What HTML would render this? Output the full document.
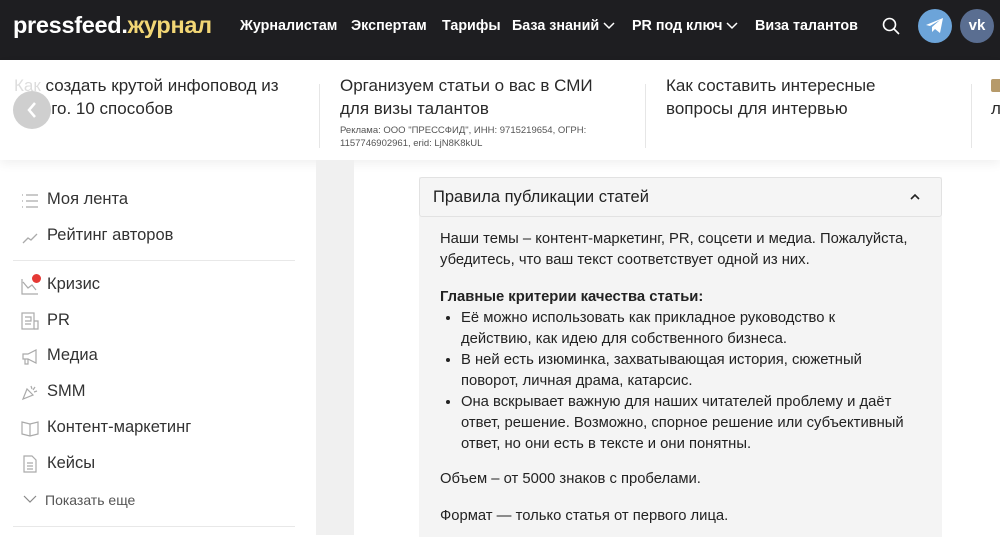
<!DOCTYPE html>
<html><head><meta charset="utf-8"><style>
*{margin:0;padding:0;box-sizing:border-box}
body{width:1000px;height:535px;overflow:hidden;background:#fff;font-family:"Liberation Sans",Arial,sans-serif;position:relative}
.hdr{position:absolute;left:0;top:0;width:1000px;height:60px;background:#1e1e21}
.logo{position:absolute;left:13px;top:12px;font-size:23.5px;font-weight:bold;color:#fff;letter-spacing:-0.3px}
.logo span{color:#f2d675}
.nav{position:absolute;top:18px;font-size:14.3px;font-weight:bold;color:#fff;white-space:nowrap}
.car{position:absolute;left:0;top:60px;width:1000px;height:100px;background:#fff;box-shadow:0 4px 10px rgba(0,0,0,0.06)}
.ci{position:absolute;top:14px;font-size:17px;color:#2a2a2a;line-height:23px}
.sep{position:absolute;top:24px;width:1px;height:64px;background:#e6e6e6}
.gray{position:absolute;left:316px;top:160px;width:38px;height:375px;background:#f0f0f0}
.side{position:absolute;left:20px;font-size:16.5px;color:#333}
.ic{position:absolute;left:21px;width:18px;height:18px}
.hr{position:absolute;left:13px;width:282px;height:1px;background:#e8e8e8}
.acc{position:absolute;left:419px;top:177px;width:523px;height:360px;background:#f4f4f4}
.acch{height:40px;border:1px solid #e2e2e2;border-radius:3px;background:#f5f5f5;font-size:16.5px;color:#222;padding:10px 13px}
.txt{font-size:14.8px;color:#222;line-height:21px;position:absolute;left:21px;width:475px}
ul{padding-left:21px;width:500px;white-space:nowrap}
</style></head><body>
<div class="hdr">
<div class="logo">pressfeed.<span>журнал</span></div>
<div class="nav" style="left:240px">Журналистам</div>
<div class="nav" style="left:351px">Экспертам</div>
<div class="nav" style="left:442px">Тарифы</div>
<div class="nav" style="left:512px">База знаний <svg width="12" height="10" viewBox="0 0 12 10"><path d="M1 3l5 5 5-5" stroke="#fff" fill="none" stroke-width="1.5"/></svg></div>
<div class="nav" style="left:632px">PR под ключ <svg width="12" height="10" viewBox="0 0 12 10"><path d="M1 3l5 5 5-5" stroke="#fff" fill="none" stroke-width="1.5"/></svg></div>
<div class="nav" style="left:755px">Виза талантов</div>
<svg style="position:absolute;left:882px;top:17px" width="18" height="18" viewBox="0 0 18 18"><circle cx="7.5" cy="7.5" r="6" stroke="#fff" stroke-width="1.6" fill="none"/><path d="M12 12l5 5" stroke="#fff" stroke-width="1.6"/></svg>
<div style="position:absolute;left:918px;top:9px;width:34px;height:34px;border-radius:50%;background:#6ca4d9"></div>
<svg style="position:absolute;left:925px;top:17px" width="20" height="18" viewBox="0 0 20 18"><path d="M1 8l17-7-3 15-5-4-3 3 0-5 8-7-10 6z" fill="#fff"/></svg>
<div style="position:absolute;left:960px;top:9px;width:34px;height:34px;border-radius:50%;background:#5a6e91;color:#fff;font-weight:bold;font-size:15px;text-align:center;line-height:34px">vk</div>
</div>
<div class="car">
<div class="ci" style="left:14px;width:290px"><span style="color:#ddd">Как</span> создать крутой инфоповод из ничего. 10 способов</div>
<div style="position:absolute;left:13px;top:31px;width:38px;height:38px;border-radius:50%;background:#cfcfcf"></div>
<svg style="position:absolute;left:25px;top:40px" width="14" height="20" viewBox="0 0 14 20"><path d="M10 3l-6 7 6 7" stroke="#fff" stroke-width="2.5" fill="none"/></svg>
<div class="sep" style="left:319px"></div>
<div class="ci" style="left:340px;width:280px">Организуем статьи о вас в СМИ для визы талантов</div>
<div style="position:absolute;left:340px;top:64px;font-size:9.5px;color:#555;line-height:13px;width:260px">Реклама: ООО "ПРЕССФИД", ИНН: 9715219654, ОГРН: 1157746902961, erid: LjN8K8kUL</div>
<div class="sep" style="left:645px"></div>
<div class="ci" style="left:666px;width:260px">Как составить интересные вопросы для интервью</div>
<div class="sep" style="left:971px"></div>
<div style="position:absolute;left:991px;top:19px;width:12px;height:13px;background:#b69a6a;border-radius:2px"></div>
<div class="ci" style="left:991px;top:37px">л</div>
</div>
<div class="gray"></div>
<svg class="ic" style="top:192px" viewBox="0 0 18 18"><path d="M5 3h12M5 9h12M5 15h12M1 3h1M1 9h1M1 15h1" stroke="#aaa" stroke-width="1.3"/></svg>
<div class="side" style="left:47px;top:190px">Моя лента</div>
<svg class="ic" style="top:228px" viewBox="0 0 18 18"><path d="M2 15l5-5 3 2 6-6" stroke="#aaa" stroke-width="1.3" fill="none"/></svg>
<div class="side" style="left:47px;top:226px">Рейтинг авторов</div>
<div class="hr" style="top:260px"></div>
<svg class="ic" style="top:277px" viewBox="0 0 18 18"><path d="M1 2v15h16M2 5l5 6 4-3 4 5" stroke="#aaa" stroke-width="1.2" fill="none"/></svg>
<div style="position:absolute;left:32px;top:274px;width:9px;height:9px;border-radius:50%;background:#e53935"></div>
<div class="side" style="left:47px;top:275px">Кризис</div>
<svg class="ic" style="top:312px" viewBox="0 0 18 18"><rect x="1" y="1" width="12" height="16" stroke="#aaa" fill="none" stroke-width="1.2"/><path d="M13 9h4v8h-4M4 5h6v4H4M4 12h6" stroke="#aaa" fill="none" stroke-width="1.2"/></svg>
<div class="side" style="left:47px;top:311px">PR</div>
<svg class="ic" style="top:348px" viewBox="0 0 18 18"><path d="M2 6h5l8-4v13l-8-4H2zM4 11v5h3v-5" stroke="#aaa" fill="none" stroke-width="1.2"/></svg>
<div class="side" style="left:47px;top:346px">Медиа</div>
<svg class="ic" style="top:383px" viewBox="0 0 18 18"><path d="M2 16l4-10 6 6zM10 3l1 3M14 4l-2 3M16 8l-3 1" stroke="#aaa" fill="none" stroke-width="1.2"/></svg>
<div class="side" style="left:47px;top:382px">SMM</div>
<svg class="ic" style="top:419px" viewBox="0 0 18 18"><path d="M1 3l8 2 8-2v12l-8 2-8-2zM9 5v12" stroke="#aaa" fill="none" stroke-width="1.2"/></svg>
<div class="side" style="left:47px;top:418px">Контент-маркетинг</div>
<svg class="ic" style="top:455px" viewBox="0 0 18 18"><path d="M3 1h8l4 4v12H3zM6 8h6M6 11h6M6 14h6" stroke="#aaa" fill="none" stroke-width="1.2"/></svg>
<div class="side" style="left:47px;top:454px">Кейсы</div>
<svg style="position:absolute;left:23px;top:494px" width="14" height="10" viewBox="0 0 14 10"><path d="M1 2l6 6 6-6" stroke="#888" fill="none" stroke-width="1.2"/></svg>
<div class="side" style="left:45px;top:492px;font-size:14px;color:#555">Показать еще</div>
<div class="hr" style="top:526px"></div>
<div class="acc">
<div class="acch">Правила публикации статей<svg style="position:absolute;left:491px;top:16px" width="10" height="8" viewBox="0 0 10 8"><path d="M1 6l4-4 4 4" stroke="#222" fill="none" stroke-width="1.6"/></svg></div>
<div class="txt" style="top:52px">Наши темы – контент-маркетинг, PR, соцсети и медиа. Пожалуйста, убедитесь, что ваш текст соответствует одной из них.</div>
<div class="txt" style="top:110px"><b>Главные критерии качества статьи:</b>
<ul><li>Её можно использовать как прикладное руководство к<br>действию, как идею для собственного бизнеса.</li><li>В ней есть изюминка, захватывающая история, сюжетный<br>поворот, личная драма, катарсис.</li><li>Она вскрывает важную для наших читателей проблему и даёт<br>ответ, решение. Возможно, спорное решение или субъективный<br>ответ, но они есть в тексте и они понятны.</li></ul></div>
<div class="txt" style="top:292px">Объем – от 5000 знаков с пробелами.</div>
<div class="txt" style="top:329px">Формат — только статья от первого лица.</div>
</div>
</body></html>
